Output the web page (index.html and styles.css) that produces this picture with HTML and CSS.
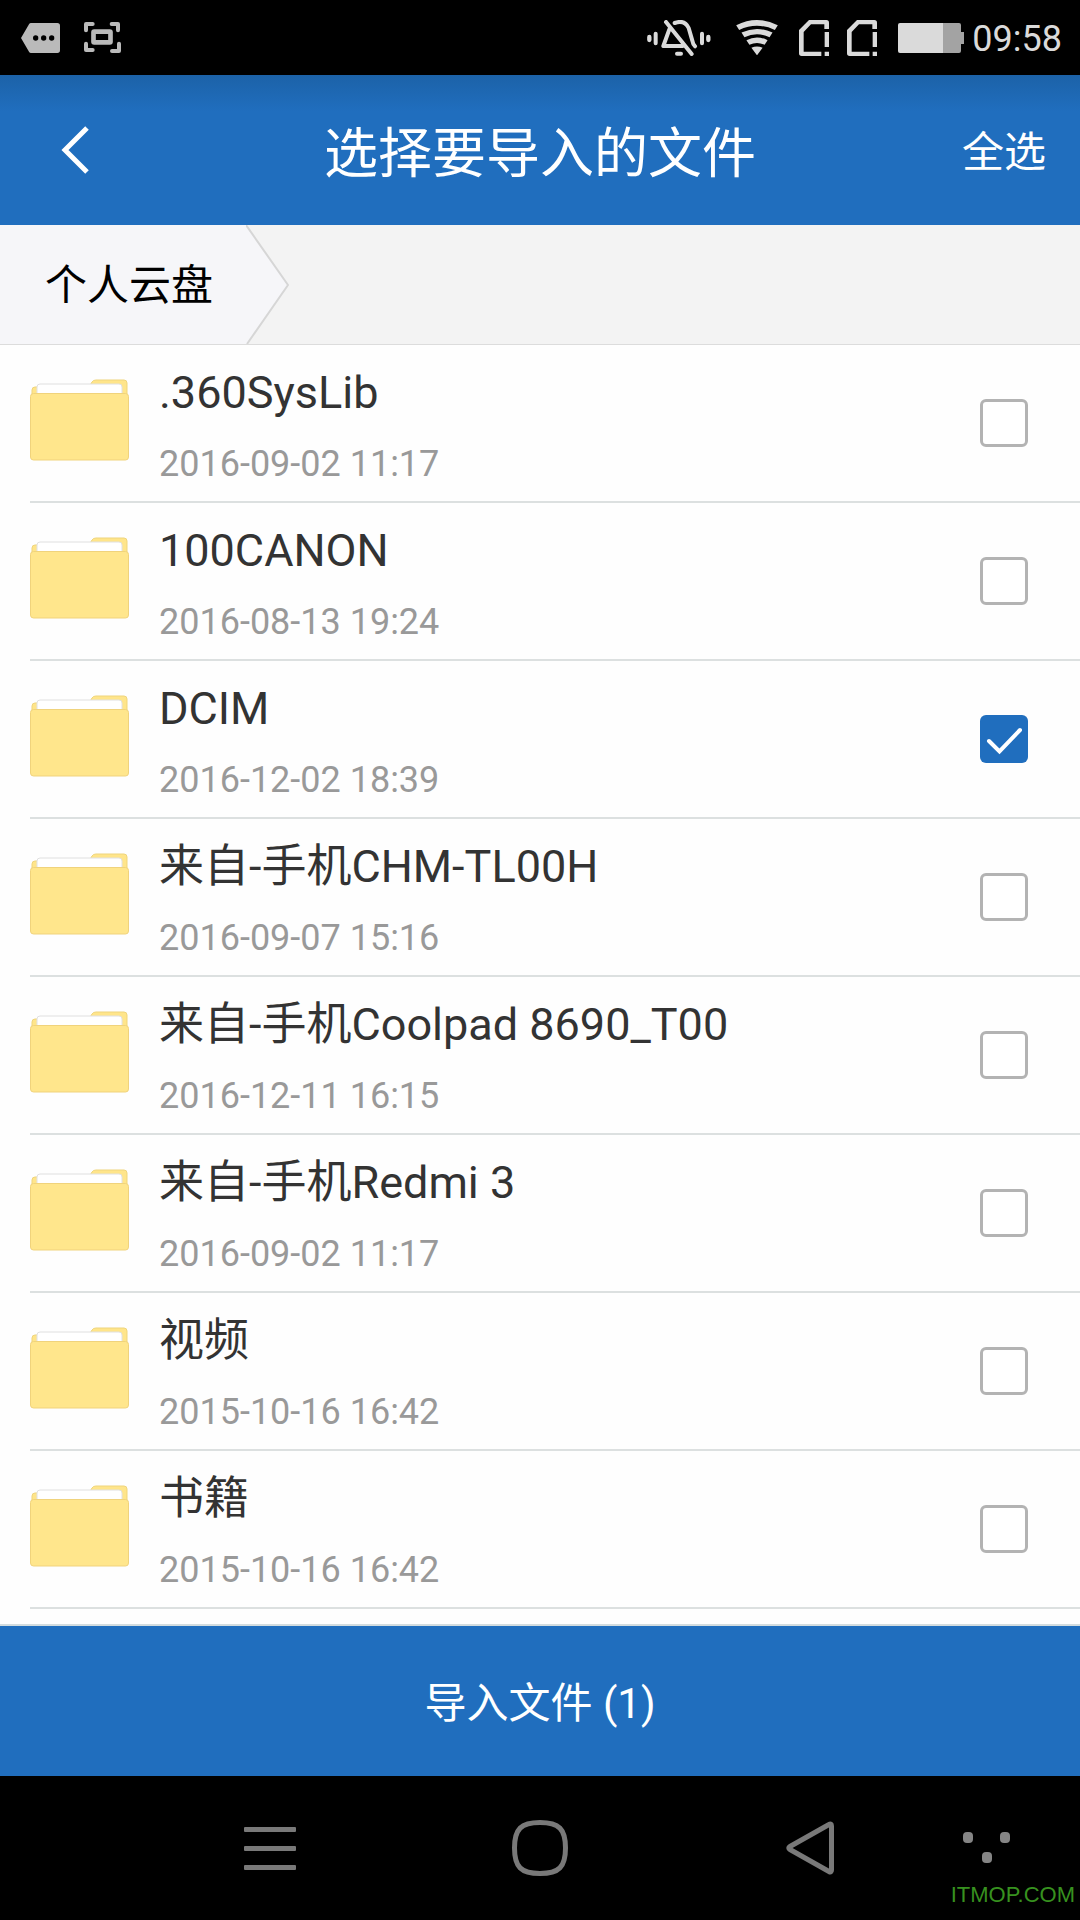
FILE: index.html
```html
<!DOCTYPE html>
<html lang="zh-CN">
<head>
<meta charset="utf-8">
<meta name="viewport" content="width=device-width, initial-scale=1">
<title>选择要导入的文件</title>
<link rel="stylesheet" href="styles.css">
</head>
<body>
<svg class="sprite" aria-hidden="true">
  <symbol id="folder" viewBox="0 0 99 82">
    <path d="M2 20V11q0-3 3-3h54l3-5q1-2 4-2h28q3 0 3 3v16z" fill="#ffe58a" stroke="#efd57c"/>
    <path d="M7 20V8q0-3 3-3h79q3 0 3 3v12z" fill="#fff" stroke="#e0e0e0"/>
    <rect x="0.5" y="14.500" width="98" height="66.500" rx="3" fill="#ffe68c" stroke="#f0d37c"/>
  </symbol>
  <symbol id="sim" viewBox="0 0 90 108">
    <path d="M90 27V8q0-8-8-8H30L0 30v70q0 8 8 8h59V95H14V36L36 13h40v14zM77 36h13v45H77zM77 95h13v13H77z" fill="#dadada"/>
  </symbol>
</svg>
<div class="screen">
  <div class="status">
    <div class="status-left">
      <svg width="39" height="30" viewBox="63 69 117 90"><path d="M93 69h79q8 0 8 8v74q0 8-8 8H93q-4 0-6-4L63 114l24-41q2-4 6-4z" fill="#bababa"/><circle cx="107" cy="114" r="8"/><circle cx="131" cy="114" r="8"/><circle cx="155" cy="114" r="8"/></svg>
      <svg width="37" height="31" viewBox="252 69 111 93" fill="none" stroke="#bababa"><path d="M258 94V75h20M335 75h19v19M258 134v19h20M336 156h21v-22" stroke-width="12" stroke-linecap="round" stroke-linejoin="round"/><rect x="280.500" y="98" width="51" height="32" rx="2" stroke-width="14"/></svg>
    </div>
    <div class="status-right">
      <svg class="bell" width="64" height="36" viewBox="81 60 192 108" fill="none" stroke="#dadada" stroke-linecap="round" stroke-linejoin="round"><path d="M88 111v9M265 111v9" stroke-width="13"/><path d="M107 101v29M246 101v29" stroke-width="12"/><path d="M138 66L215 162M148 88L130 138h58M164 69Q194 58 206 84L217 122q2 12 8 17M171 161h12" stroke-width="12"/></svg>
      <svg class="wifi" width="42" height="35" viewBox="348 60 126 106" fill="#dadada"><path d="M348 76Q411 44 474 76L465 90Q411 65 357 90zM364 98Q411 76 458 98L449 112Q411 95 373 112zM379 121Q411 105 443 121L434 135Q411 124 388 135zM394 144Q411 136 428 144L411 167z"/></svg>
      <svg width="30" height="36"><use href="#sim"/></svg>
      <svg width="30" height="36"><use href="#sim"/></svg>
      <svg class="battery" width="66" height="30" viewBox="0 0 66 30"><path d="M45 0h16q2 0 2 2v7h3v12h-3v7q0 2-2 2H45z" fill="#a3a3a3"/><path d="M2 0h43v30H2q-2 0-2-2V2q0-2 2-2z" fill="#dadada"/></svg>
      <time class="clock">09:58</time>
    </div>
  </div>
  <header class="header">
    <button class="back" type="button" aria-label="返回"><svg width="30" height="50" viewBox="0 0 30 50"><path d="M27 3L5 25l22 22" fill="none" stroke="#fff" stroke-width="5"/></svg></button>
    <h1 class="title">选择要导入的文件</h1>
    <button class="select-all" type="button">全选</button>
  </header>
  <nav class="crumbs" aria-label="路径">
    <a class="crumb" href="#">个人云盘</a>
    <svg class="crumb-tip" width="43" height="119" viewBox="0 0 43 119"><path d="M0 0l42 60L1 119H0z" fill="#f6f6f9"/><path d="M0 0l42 60L1 119" fill="none" stroke="#d6d6d6" stroke-width="2"/></svg>
  </nav>
  <ul class="files">
    <li><label class="file"><svg class="folder" width="99" height="82"><use href="#folder"/></svg><span class="info"><span class="name">.360SysLib</span><span class="date">2016-09-02 11:17</span></span><input class="check" type="checkbox"></label></li>
    <li><label class="file"><svg class="folder" width="99" height="82"><use href="#folder"/></svg><span class="info"><span class="name">100CANON</span><span class="date">2016-08-13 19:24</span></span><input class="check" type="checkbox"></label></li>
    <li><label class="file"><svg class="folder" width="99" height="82"><use href="#folder"/></svg><span class="info"><span class="name">DCIM</span><span class="date">2016-12-02 18:39</span></span><input class="check" type="checkbox" checked></label></li>
    <li><label class="file"><svg class="folder" width="99" height="82"><use href="#folder"/></svg><span class="info"><span class="name">来自-手机CHM-TL00H</span><span class="date">2016-09-07 15:16</span></span><input class="check" type="checkbox"></label></li>
    <li><label class="file"><svg class="folder" width="99" height="82"><use href="#folder"/></svg><span class="info"><span class="name">来自-手机Coolpad 8690_T00</span><span class="date">2016-12-11 16:15</span></span><input class="check" type="checkbox"></label></li>
    <li><label class="file"><svg class="folder" width="99" height="82"><use href="#folder"/></svg><span class="info"><span class="name">来自-手机Redmi 3</span><span class="date">2016-09-02 11:17</span></span><input class="check" type="checkbox"></label></li>
    <li><label class="file"><svg class="folder" width="99" height="82"><use href="#folder"/></svg><span class="info"><span class="name">视频</span><span class="date">2015-10-16 16:42</span></span><input class="check" type="checkbox"></label></li>
    <li><label class="file"><svg class="folder" width="99" height="82"><use href="#folder"/></svg><span class="info"><span class="name">书籍</span><span class="date">2015-10-16 16:42</span></span><input class="check" type="checkbox"></label></li>
  </ul>
  <button class="import" type="button">导入文件 (1)</button>
  <div class="softkeys">
    <button class="key key-menu" type="button" aria-label="菜单"><svg width="52" height="43" viewBox="0 0 52 43" fill="#797979"><rect width="52" height="5" rx="1"/><rect y="19" width="52" height="5" rx="1"/><rect y="38" width="52" height="5" rx="1"/></svg></button>
    <button class="key" type="button" aria-label="主屏幕"><svg width="56" height="56" viewBox="0 0 56 56"><path d="M28 2.500C47 2.500 53.500 9 53.500 28S47 53.500 28 53.500 2.500 47 2.500 28 9 2.500 28 2.500z" fill="none" stroke="#797979" stroke-width="5"/></svg></button>
    <button class="key" type="button" aria-label="返回键"><svg width="48" height="54" viewBox="0 0 48 54"><path d="M43 3.500Q45.500 2 45.500 5v44q0 3-2.500 1.500L4 28.500q-2.500-1.500 0-3z" fill="none" stroke="#797979" stroke-width="5"/></svg></button>
    <button class="key key-more" type="button" aria-label="更多"><svg width="48" height="32" viewBox="0 0 48 32" fill="#858585"><rect width="10" height="11" rx="4"/><rect x="37" width="10" height="11" rx="4"/><rect x="19" y="20" width="10" height="11" rx="4"/></svg></button>
    <span class="watermark">ITMOP.COM</span>
  </div>
</div>
</body>
</html>
```
FILE: styles.css
```css
* { box-sizing: border-box; }

body {
  margin: 0;
  background: #fefefe;
  font-family: Roboto, "Noto Sans CJK SC", sans-serif;
}

button {
  margin: 0;
  padding: 0;
  border: 0;
  background: none;
  color: inherit;
  font: inherit;
  cursor: pointer;
}

svg { display: block; flex: none; }

.sprite { position: absolute; width: 0; height: 0; }

.screen {
  display: flex;
  flex-direction: column;
  min-height: 100vh;
}

.status {
  display: flex;
  justify-content: space-between;
  align-items: center;
  height: 75px;
  padding: 0 18px 0 21px;
  background: #000;
}

.status-left { display: flex; align-items: center; gap: 24px; }
.status-right { display: flex; align-items: center; gap: 18px; }
.bell { margin-right: 7px; }
.wifi { margin-right: 3px; }
.battery { margin-left: 3px; }

.clock {
  margin-left: -10px;
  padding-top: 2px;
  color: #dadada;
  font-size: 36px;
  line-height: 42px;
}

.header {
  display: grid;
  grid-template-columns: 1fr auto 1fr;
  align-items: center;
  height: 150px;
  padding: 0 34px 0 60px;
  background: linear-gradient(#1c62a8, #206ebe 36px);
  color: #fff;
}

.back { justify-self: start; }

.title {
  margin: 0 0 0 -26px;
  padding-top: 10px;
  font-size: 54px;
  font-weight: 400;
  line-height: 78px;
}

.select-all {
  justify-self: end;
  padding-top: 6px;
  font-size: 42px;
  line-height: 60px;
}

.crumbs {
  display: flex;
  height: 120px;
  border-bottom: 1px solid #dcdcdc;
  background: #f3f3f3;
}

.crumb {
  display: flex;
  align-items: center;
  padding: 0 33px 6px 45px;
  background: #f6f6f9;
  color: #000;
  font-size: 42px;
  text-decoration: none;
}

.files {
  flex: 1;
  margin: 0;
  padding: 0 0 15px 30px;
  list-style: none;
}

.file {
  display: flex;
  align-items: center;
  gap: 30px;
  height: 158px;
  padding-right: 52px;
  border-bottom: 2px solid #dce0e0;
}

.folder { margin-bottom: 6px; }

.info {
  display: flex;
  flex: 1;
  flex-direction: column;
  gap: 18px;
  padding-top: 4px;
}

.name { color: #333; font-size: 45px; line-height: 60px; }
.date { color: #999; font-size: 36px; line-height: 46px; }

.check {
  flex: none;
  width: 48px;
  height: 48px;
  margin: 0;
  border: 3px solid #b3b3b3;
  border-radius: 6px;
  background: #fff;
  appearance: none;
}

.check:checked {
  border: 0;
  background: #206ebe url("data:image/svg+xml,%3Csvg xmlns='http://www.w3.org/2000/svg' viewBox='0 0 48 48'%3E%3Cpath d='M9 26l10.500 10.500L40 15' fill='none' stroke='white' stroke-width='4' stroke-linecap='round'/%3E%3C/svg%3E") center / 48px;
}

.import {
  height: 152px;
  padding-bottom: 4px;
  border-top: 2px solid #d2dcdf;
  background: #206ebe;
  color: #fff;
  font-size: 42px;
}

.softkeys {
  position: relative;
  display: grid;
  grid-template-columns: 1fr 2fr 2fr 2fr 1fr;
  height: 144px;
  background: #000;
}

.key { display: flex; align-items: center; justify-content: center; }
.key-menu { grid-column: 2; }
.key-more { justify-content: flex-start; padding-left: 18px; }

.watermark {
  position: absolute;
  right: 5px;
  bottom: 12px;
  color: #37911f;
  font-family: "Liberation Sans", Arial, sans-serif;
  font-size: 22px;
  line-height: 26px;
}
```
